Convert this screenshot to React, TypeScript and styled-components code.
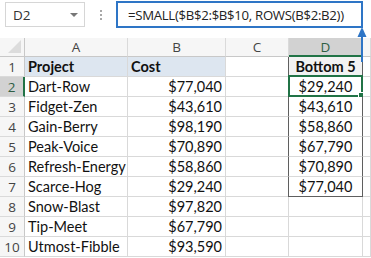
import React from "react";
import styled, { createGlobalStyle } from "styled-components";

const Global = createGlobalStyle`
  html, body { margin: 0; padding: 0; background: #fff; }
  body { width: 371px; height: 258px; overflow: hidden; }
`;

const Page = styled.div`
  position: relative;
  width: 371px;
  height: 258px;
  overflow: hidden;
  background: #fff;
`;

const TopBar = styled.div`
  display: flex;
  align-items: flex-start;
  height: 38px;
  padding: 1px 0 0 5px;
  box-sizing: border-box;
`;

const NameBox = styled.div`
  width: 80px;
  height: 25px;
  margin-top: 1px;
  box-sizing: border-box;
  border: 1px solid #d6d6d6;
  display: flex;
  align-items: center;
  justify-content: space-between;
  padding: 0 6px 0 7px;
  font-family: "Open Sans", sans-serif;
  font-size: 13.5px;
  color: #333;
`;

const Caret = styled.span`
  width: 0;
  height: 0;
  border-left: 4px solid transparent;
  border-right: 4px solid transparent;
  border-top: 4px solid #777;
`;

const Dots = styled.div`
  width: 31px;
  height: 27px;
  display: flex;
  flex-direction: column;
  align-items: center;
  justify-content: center;
  gap: 2px;
  & > span {
    width: 2px;
    height: 2px;
    background: #a8a8a8;
  }
`;

const FormulaBox = styled.div`
  width: 247px;
  height: 27px;
  box-sizing: border-box;
  border: 2px solid #2e75c6;
  display: flex;
  align-items: center;
  padding-left: 10px;
  font-family: "Open Sans", sans-serif;
  font-size: 13.2px;
  letter-spacing: -0.3px;
  color: #222;
  white-space: nowrap;
`;

const Grid = styled.div`
  display: grid;
  grid-template-columns: 25px 103px 98px 63px 74px 8px;
  grid-template-rows: 19px repeat(10, 20px);
  font-family: "Lato", "Liberation Sans", sans-serif;
  font-size: 14.5px;
  color: #111;
`;

type CellProps = {
  $align?: "left" | "right" | "center";
  $bg?: string;
  $bold?: boolean;
};

const Cell = styled.div<CellProps>`
  box-sizing: border-box;
  border-right: 1px solid #d9d9d9;
  border-bottom: 1px solid #d9d9d9;
  background: ${(p) => p.$bg || "#fff"};
  font-weight: ${(p) => (p.$bold ? 700 : 400)};
  display: flex;
  align-items: center;
  justify-content: ${(p) =>
    p.$align === "right" ? "flex-end" : p.$align === "center" ? "center" : "flex-start"};
  padding: 0 3px;
  white-space: nowrap;
  position: relative;
`;

const ColHead = styled(Cell)<{ $active?: boolean }>`
  background: ${(p) => (p.$active ? "#d2d2d2" : "#f6f6f6")};
  color: ${(p) => (p.$active ? "#2f5e44" : "#444")};
  font-family: "Open Sans", sans-serif;
  font-size: 13.5px;
  border-right-color: ${(p) => (p.$active ? "#c0c0c0" : "#dadada")};
  border-bottom: ${(p) => (p.$active ? "2px solid #217346" : "1px solid #c8c8c8")};
  justify-content: center;
`;

const RowHead = styled(Cell)<{ $active?: boolean }>`
  background: ${(p) => (p.$active ? "#d2d2d2" : "#f6f6f6")};
  color: ${(p) => (p.$active ? "#2f5e44" : "#444")};
  border-right: ${(p) => (p.$active ? "2px solid #217346" : "1px solid #c8c8c8")};
  border-bottom-color: #dadada;
  justify-content: center;
  padding: 0;
  font-family: "Open Sans", sans-serif;
  font-size: 13.5px;
`;

const Corner = styled(Cell)`
  background: #f6f6f6;
  border-right-color: #c8c8c8;
  border-bottom-color: #c8c8c8;
  &::after {
    content: "";
    position: absolute;
    right: 3px;
    bottom: 3px;
    width: 0;
    height: 0;
    border-left: 13px solid transparent;
    border-bottom: 13px solid #dcdcdc;
  }
`;

const DCell = styled(Cell)<{ $last?: boolean }>`
  border-left: 1px solid #5f5f5f;
  border-right: 1px solid #5f5f5f;
  margin-left: -1px;
  border-bottom-color: ${(p) => (p.$last ? "#5f5f5f" : "#d9d9d9")};
  justify-content: center;
`;

const Selection = styled.div`
  position: absolute;
  left: -1px;
  top: -2px;
  right: -1px;
  bottom: -1px;
  border: 2px solid #217346;
  pointer-events: none;
  &::after {
    content: "";
    position: absolute;
    right: -4px;
    bottom: -4px;
    width: 5px;
    height: 5px;
    background: #217346;
    border: 1px solid #fff;
  }
`;

const Arrow = styled.svg`
  position: absolute;
  left: 356px;
  top: 26px;
`;

const rows: [string, string, string][] = [
  ["Dart-Row", "$77,040", "$29,240"],
  ["Fidget-Zen", "$43,610", "$43,610"],
  ["Gain-Berry", "$98,190", "$58,860"],
  ["Peak-Voice", "$70,890", "$67,790"],
  ["Refresh-Energy", "$58,860", "$70,890"],
  ["Scarce-Hog", "$29,240", "$77,040"],
  ["Snow-Blast", "$97,820", ""],
  ["Tip-Meet", "$67,790", ""],
  ["Utmost-Fibble", "$93,590", ""],
];

export default function App() {
  return (
    <Page>
      <Global />
      <TopBar>
        <NameBox>
          <span>D2</span>
          <Caret />
        </NameBox>
        <Dots>
          <span />
          <span />
          <span />
        </Dots>
        <FormulaBox>=SMALL($B$2:$B$10, ROWS(B$2:B2))</FormulaBox>
      </TopBar>
      <Grid>
        <Corner />
        <ColHead>A</ColHead>
        <ColHead>B</ColHead>
        <ColHead>C</ColHead>
        <ColHead $active>D</ColHead>
        <ColHead />

        <RowHead>1</RowHead>
        <Cell $bg="#dde6f0" $bold>Project</Cell>
        <Cell $bg="#dde6f0" $bold>Cost</Cell>
        <Cell />
        <DCell $bg="#f2f2f2" $bold>Bottom 5</DCell>
        <Cell />

        {rows.map(([name, cost, bottom], i) => {
          const n = i + 2;
          const inRange = n <= 7;
          return (
            <React.Fragment key={n}>
              <RowHead $active={n === 2}>{n}</RowHead>
              <Cell>{name}</Cell>
              <Cell $align="right">{cost}</Cell>
              <Cell />
              {inRange ? (
                <DCell $last={n === 7}>
                  {bottom}
                  {n === 2 && <Selection />}
                </DCell>
              ) : (
                <Cell />
              )}
              <Cell />
            </React.Fragment>
          );
        })}
      </Grid>
      <Arrow width="12" height="36" viewBox="0 0 12 36">
        <path d="M6 1 L1.5 11 L10.5 11 Z" fill="#2e75c6" />
        <line x1="6" y1="8" x2="6" y2="36" stroke="#2e75c6" strokeWidth="2" />
      </Arrow>
    </Page>
  );
}
